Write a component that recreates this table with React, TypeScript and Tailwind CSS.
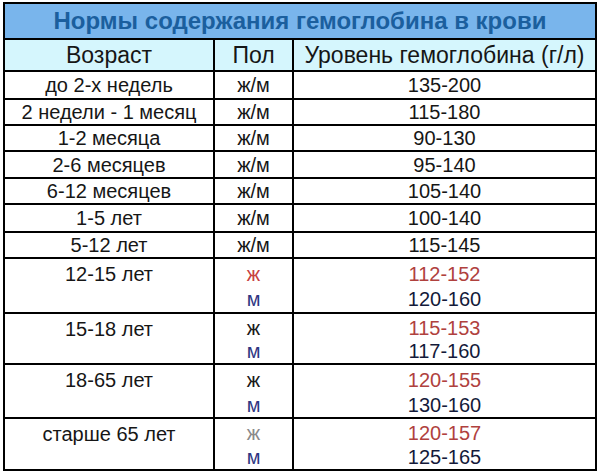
const simpleRows = [
  { age: "до 2-х недель", sex: "ж/м", level: "135-200", h: "h-[28px]" },
  { age: "2 недели - 1 месяц", sex: "ж/м", level: "115-180", h: "h-[26px]" },
  { age: "1-2 месяца", sex: "ж/м", level: "90-130", h: "h-[26px]" },
  { age: "2-6 месяцев", sex: "ж/м", level: "95-140", h: "h-[27px]" },
  { age: "6-12 месяцев", sex: "ж/м", level: "105-140", h: "h-[26px]" },
  { age: "1-5 лет", sex: "ж/м", level: "100-140", h: "h-[28px]" },
  { age: "5-12 лет", sex: "ж/м", level: "115-145", h: "h-[26px]" },
];

const groups = [
  { age: "12-15 лет", f: "112-152", m: "120-160", fSex: "text-[#c8413f]", h1: "h-[28px]", h2: "h-[27px]" },
  { age: "15-18 лет", f: "115-153", m: "117-160", fSex: "text-[#1a1a1a]", h1: "h-[26px]", h2: "h-[25px]" },
  { age: "18-65 лет", f: "120-155", m: "130-160", fSex: "text-[#1a1a1a]", h1: "h-[28px]", h2: "h-[26px]" },
  { age: "старше 65 лет", f: "120-157", m: "125-165", fSex: "text-[#8a8a8a]", h1: "h-[27px]", h2: "h-[25px]" },
];

export default function App() {
  return (
    <div className="w-[600px] h-[473px] bg-white pt-[2px] pl-[3px] font-['Liberation_Sans',Arial,sans-serif]">
      <table className="w-[594px] border-collapse border-[2px] border-black text-center text-[20px] leading-none text-[#161616]">
        <colgroup>
          <col className="w-[210px]" />
          <col className="w-[79px]" />
          <col />
        </colgroup>
        <tbody>
          <tr className="h-[36px] bg-[#79b5ec]">
            <td colSpan={3} className="border-[2px] border-black text-[24px] font-bold text-[#1b5f9e]">
              Нормы содержания гемоглобина в крови
            </td>
          </tr>
          <tr className="h-[32px] bg-[#d5f6fd] text-[23px]">
            <td className="border-[2px] border-black">Возраст</td>
            <td className="border-[2px] border-black">Пол</td>
            <td className="border-[2px] border-black">Уровень гемоглобина (г/л)</td>
          </tr>
          {simpleRows.map((r) => (
            <tr key={r.age} className={r.h}>
              <td className="border-[2px] border-black">{r.age}</td>
              <td className="border-[2px] border-black">{r.sex}</td>
              <td className="border-[2px] border-black">{r.level}</td>
            </tr>
          ))}
          {groups.map((g) => (
            <>
              <tr key={g.age + "f"} className={g.h1}>
                <td rowSpan={2} className="border-[2px] border-black align-top pt-[5px]">
                  {g.age}
                </td>
                <td className={`border-x-[2px] border-black pt-[2px] ${g.fSex}`}>ж</td>
                <td className="border-x-[2px] border-black pt-[2px] text-[#b0413e]">{g.f}</td>
              </tr>
              <tr key={g.age + "m"} className={`${g.h2} border-b-[2px] border-black`}>
                <td className="border-x-[2px] border-b-[2px] border-black text-[#2e3682]">м</td>
                <td className="border-x-[2px] border-b-[2px] border-black text-[#141a3a]">{g.m}</td>
              </tr>
            </>
          ))}
        </tbody>
      </table>
    </div>
  );
}
